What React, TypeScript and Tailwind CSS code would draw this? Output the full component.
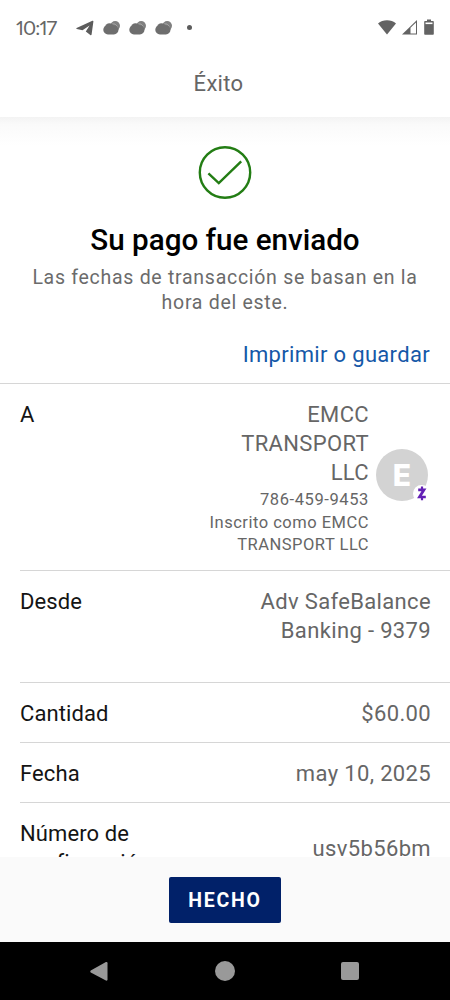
import React from 'react';

interface RowProps {
  label: string;
  className?: string;
  children: React.ReactNode;
}

const Row: React.FC<RowProps> = ({ label, className = 'items-start pb-[14px]', children }) => {
  return (
    <div className={`ml-5 flex justify-between border-b border-[#d6d6d6] pt-4 pr-[19px] ${className}`}>
      <dt className="w-[150px] tracking-[0.100px] text-[#141414]">{label}</dt>
      <dd className="text-right text-[#666]">{children}</dd>
    </div>
  );
};

const WeatherIcon: React.FC = () => {
  return (
    <svg width="18" height="16" viewBox="0 0 18 16" fill="#6e6e6e">
      <circle cx="12.200" cy="5.800" r="4.800" fill="#808080" />
      <path d="M9 4.200c2.500-1 5 .5 5.600 3.800" fill="none" stroke="#b5b5b5" strokeWidth="0.800" />
      <rect x="0.300" y="5.200" width="15.200" height="9.200" rx="4.600" />
      <circle cx="6.500" cy="7.800" r="4.600" />
    </svg>
  );
};

const StatusBar: React.FC = () => {
  return (
    <div className="flex h-[55px] items-center pr-4 pl-4">
      <span className="w-[60px] pb-[2px] font-[Lato] text-[20px] leading-none tracking-[-0.900px] text-[#666] proportional-nums">
        10:17
      </span>
      <svg width="18" height="16" viewBox="0 0 18 16" fill="#5c5c5c">
        <path d="M.6 8 16.400.8c.7-.3 1.100.1 1 .8L15.600 14.400c-.1.800-.7 1-1.300.6L9.800 11.600 13.600 5.600 6.500 10.200.8 8.900C.2 8.700.1 8.300.6 8z" />
      </svg>
      <div className="ml-[9px] flex gap-2">
        <WeatherIcon />
        <WeatherIcon />
        <WeatherIcon />
      </div>
      <span className="mb-px ml-[14px] size-[5px] rounded-full bg-[#5c5c5c]" />
      <div className="ml-auto flex items-center pb-[2px]">
        <svg width="18" height="16" viewBox="0 0 18 16" fill="#636363">
          <path d="M9 15.500 0 4.500C2.500 2.300 5.500 1.200 9 1.200S15.500 2.300 18 4.500z" />
        </svg>
        <svg className="ml-[6px]" width="15" height="16" viewBox="0 0 15 16">
          <path d="M0 15.500 15 1v14.500z" fill="#636363" />
          <path d="M8.500 8.800 14 3.600v10.900H8.500z" fill="#fff" />
        </svg>
        <svg className="ml-[7px]" width="10" height="16" viewBox="0 0 10 16">
          <path d="M3 .500h4v1.500h2q.8 0 .8.800V15q0 .8-.8.800H1q-.8 0-.8-.8V2.800q0-.8.8-.8h2z" fill="#636363" />
          <path d="M1.500 3.500h7v1.600h-7z" fill="#fff" />
        </svg>
      </div>
    </div>
  );
};

const Avatar: React.FC = () => {
  return (
    <div className="relative size-[52px] rounded-full bg-[#d3d3d3]">
      <span className="flex h-full items-center justify-center font-[Inter] text-[30px] font-extrabold tracking-normal text-white">
        E
      </span>
      <span className="absolute right-[-2px] bottom-[-1px] flex size-[17px] items-center justify-center rounded-full bg-white">
        <svg width="10" height="15" viewBox="0 0 10 15" fill="none" stroke="#6320b5" strokeWidth="2.700">
          <path d="M1.200 3.800h5.800L2.500 11h6.300" />
          <path d="M5 .5v3M5 11.300v3" strokeWidth="2.200" />
        </svg>
      </span>
    </div>
  );
};

const App: React.FC = () => {
  return (
    <div className="flex h-[1000px] w-[450px] flex-col overflow-hidden bg-white font-[Roboto,sans-serif]">
      <StatusBar />
      <header className="flex h-[62px] justify-center pt-[14px] pr-[13px] text-[22px] leading-[29px] tracking-[0.300px] text-[#666]">
        Éxito
      </header>

      <main className="min-h-0 flex-1 overflow-hidden">
        <div className="h-[29px] bg-linear-to-b from-[#f3f3f3] via-[#fafafa] via-25% to-white" />
        <section className="flex flex-col items-center">
          <svg width="54" height="54" viewBox="0 0 54 54" fill="none" stroke="#237d14" strokeWidth="2.400">
            <circle cx="27" cy="26.500" r="25.200" />
            <path d="M10.400 27.300 20.800 37.200 43.200 15.300" />
          </svg>
          <h1 className="mt-[22px] text-[29.600px] leading-[36px] font-medium text-black">Su pago fue enviado</h1>
          <p className="mt-[7px] w-[400px] text-center text-[19.500px] leading-[25px] tracking-[0.720px] text-[#6b6b6b]">
            Las fechas de transacción se basan en la hora del este.
          </p>
          <a className="mt-[25px] mr-5 self-end text-[22px] leading-[29px] tracking-[0.320px] text-[#1558a8]">
            Imprimir o guardar
          </a>
        </section>

        <dl className="mt-[14px] border-t border-[#d6d6d6] text-[22px] leading-[29px] tracking-[0.350px]">
          <Row label="A" className="items-start pb-[15px]">
            <div className="flex items-center gap-[7px]">
              <div className="w-[175px]">
                <p className="pl-[30px]">EMCC TRANSPORT LLC</p>
                <p className="text-[16.500px] leading-[25px] tracking-[0.600px]">786-459-9453</p>
                <p className="text-[16.500px] leading-[21.500px] tracking-[0.500px]">
                  Inscrito como EMCC TRANSPORT LLC
                </p>
              </div>
              <div className="pr-[3px] pb-[5px]">
                <Avatar />
              </div>
            </div>
          </Row>
          <Row label="Desde" className="items-start pb-[37px]">
            <p className="w-[200px]">Adv SafeBalance Banking - 9379</p>
          </Row>
          <Row label="Cantidad">$60.00</Row>
          <Row label="Fecha">may 10, 2025</Row>
          <Row label="Número de confirmación" className="items-center pb-[14px]">
            usv5b56bm
          </Row>
        </dl>
      </main>

      <footer className="flex h-[85px] shrink-0 items-center justify-center bg-[#fafafa]">
        <button className="h-[46px] w-[112px] rounded-[2px] bg-[#012169] pt-[3px] text-[19.500px] font-bold tracking-[1.800px] text-white">
          HECHO
        </button>
      </footer>

      <nav className="flex h-[58px] shrink-0 items-center justify-between bg-black pr-[91px] pl-[90px]">
        <svg width="18" height="21" viewBox="0 0 19 21" fill="#999">
          <path d="M.8 9.500 16.800.6q1.700-.6 1.700 1.200v17q0 1.800-1.700 1.200L.8 11.500q-1-1 0-2z" />
        </svg>
        <span className="size-5 rounded-full bg-[#999]" />
        <span className="size-[18px] rounded-[2px] bg-[#999]" />
      </nav>
    </div>
  );
};

export default App;
